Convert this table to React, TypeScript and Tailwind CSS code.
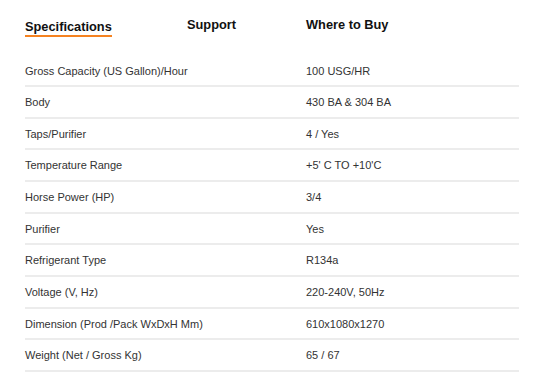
import React from "react";

const rows: [string, string][] = [
  ["Gross Capacity (US Gallon)/Hour", "100 USG/HR"],
  ["Body", "430 BA & 304 BA"],
  ["Taps/Purifier", "4 / Yes"],
  ["Temperature Range", "+5' C TO +10'C"],
  ["Horse Power (HP)", "3/4"],
  ["Purifier", "Yes"],
  ["Refrigerant Type", "R134a"],
  ["Voltage (V, Hz)", "220-240V, 50Hz"],
  ["Dimension (Prod /Pack WxDxH Mm)", "610x1080x1270"],
  ["Weight (Net / Gross Kg)", "65 / 67"],
];

export default function App() {
  return (
    <div
      className="w-[533px] h-[377px] bg-white pl-[25px] pr-[14px] overflow-hidden"
      style={{ fontFamily: '"Liberation Sans", Arial, sans-serif' }}
    >
      <div className="flex items-start pt-[17px] h-[55.5px] text-[12.8px] font-bold text-[#111]">
        <div className="w-[162px]">
          <div className="inline-block border-b-2 border-[#f58220] leading-[16px]">
            Specifications
          </div>
        </div>
        <div className="w-[119px] leading-[16px]">Support</div>
        <div className="leading-[16px]">Where to Buy</div>
      </div>
      <div>
        {rows.map(([k, v]) => (
          <div
            key={k}
            className="flex items-center pt-[1px] h-[31.65px] border-b-2 border-[#ececec] text-[11px] text-[#333]"
          >
            <div className="w-[281px]">{k}</div>
            <div>{v}</div>
          </div>
        ))}
      </div>
    </div>
  );
}
